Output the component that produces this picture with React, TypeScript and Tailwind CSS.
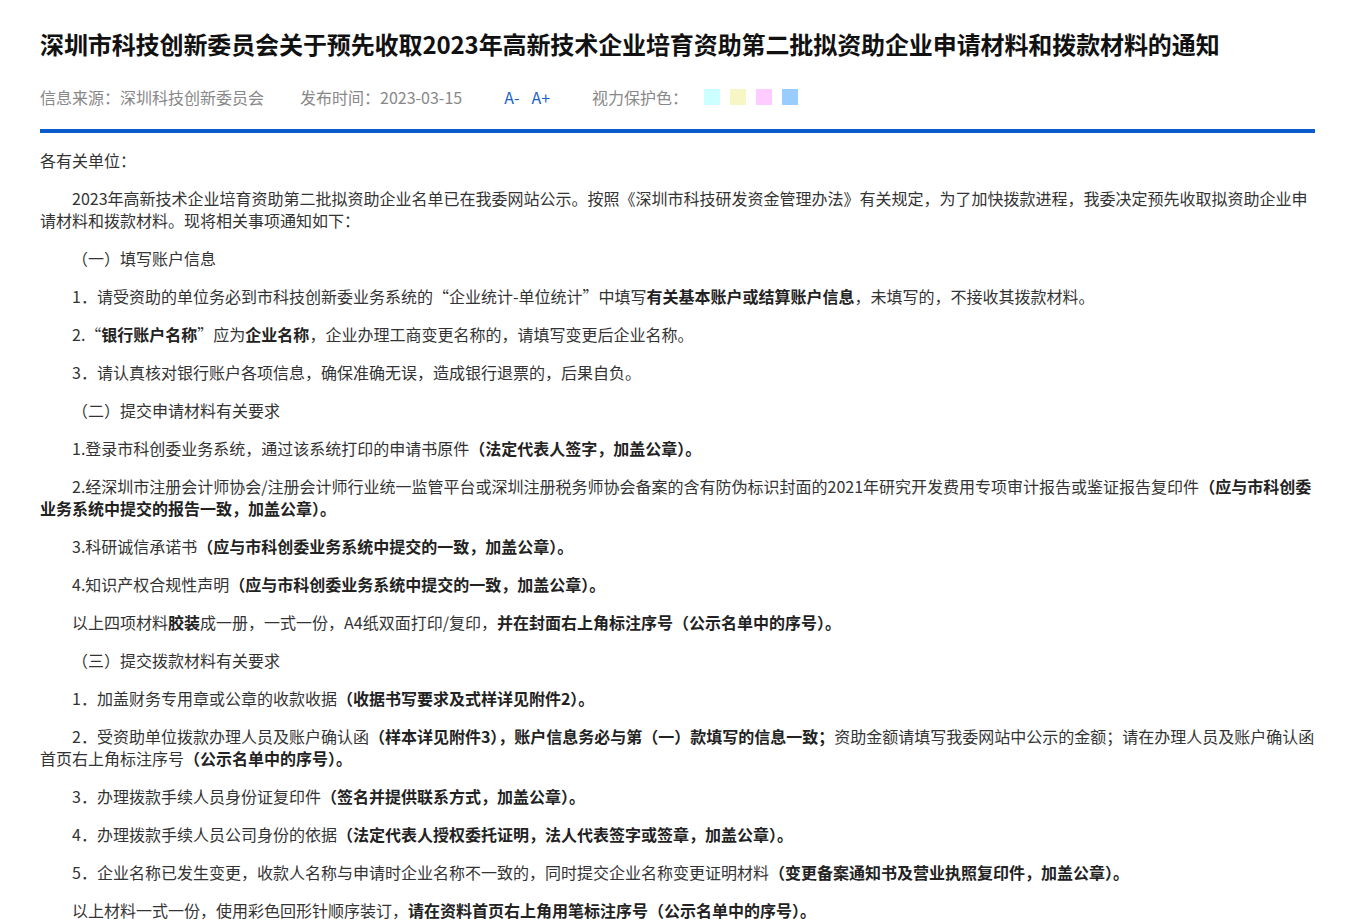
export default function App() {
  const P = ({ children, i = true }: { children: React.ReactNode; i?: boolean }) => (
    <p className={`mb-4 leading-[22px] ${i ? "indent-8" : ""}`}>{children}</p>
  );
  const B = ({ children }: { children: React.ReactNode }) => <b className="font-bold text-[#222]">{children}</b>;
  return (
    <div className="bg-white w-[1360px] h-[924px] overflow-hidden" style={{ fontFamily: '"Noto Sans CJK SC", "Noto Sans", sans-serif' }}>
      <div className="pl-10 pr-[45px]">
        <h1 className="pt-[26px] text-[24px] leading-[36px] font-bold text-[#111] tracking-[-0.1px]">
          深圳市科技创新委员会关于预先收取2023年高新技术企业培育资助第二批拟资助企业申请材料和拨款材料的通知
        </h1>
        <div className="mt-[23px] flex items-center text-[16px] text-[#888] h-6">
          <span>信息来源：深圳科技创新委员会</span>
          <span className="ml-9">发布时间：2023-03-15</span>
          <span className="ml-[42px] text-[#1a5fc8]">A-</span>
          <span className="ml-3 text-[#1a5fc8]">A+</span>
          <span className="ml-[42px]">视力保护色：</span>
          <span className="ml-4 w-4 h-4 bg-[#ccffff]" />
          <span className="ml-[10px] w-4 h-4 bg-[#f7f7c6]" />
          <span className="ml-[10px] w-4 h-4 bg-[#ffccff]" />
          <span className="ml-[10px] w-4 h-4 bg-[#99ccff]" />
        </div>
        <div className="mt-[20px] h-1 bg-[#0a5ccc]" />
        <div className="mt-[16px] text-[16px] text-[#333]">
          <P i={false}>各有关单位：</P>
          <P>2023年高新技术企业培育资助第二批拟资助企业名单已在我委网站公示。按照《深圳市科技研发资金管理办法》有关规定，为了加快拨款进程，我委决定预先收取拟资助企业申请材料和拨款材料。现将相关事项通知如下：</P>
          <P>（一）填写账户信息</P>
          <P>1．请受资助的单位务必到市科技创新委业务系统的“企业统计-单位统计”中填写<B>有关基本账户或结算账户信息</B>，未填写的，不接收其拨款材料。</P>
          <P>2.“<B>银行账户名称</B>”应为<B>企业名称</B>，企业办理工商变更名称的，请填写变更后企业名称。</P>
          <P>3．请认真核对银行账户各项信息，确保准确无误，造成银行退票的，后果自负。</P>
          <P>（二）提交申请材料有关要求</P>
          <P>1.登录市科创委业务系统，通过该系统打印的申请书原件<B>（法定代表人签字，加盖公章）。</B></P>
          <P>2.经深圳市注册会计师协会/注册会计师行业统一监管平台或深圳注册税务师协会备案的含有防伪标识封面的2021年研究开发费用专项审计报告或鉴证报告复印件<B>（应与市科创委业务系统中提交的报告一致，加盖公章）。</B></P>
          <P>3.科研诚信承诺书<B>（应与市科创委业务系统中提交的一致，加盖公章）。</B></P>
          <P>4.知识产权合规性声明<B>（应与市科创委业务系统中提交的一致，加盖公章）。</B></P>
          <P>以上四项材料<B>胶装</B>成一册，一式一份，A4纸双面打印/复印，<B>并在封面右上角标注序号（公示名单中的序号）。</B></P>
          <P>（三）提交拨款材料有关要求</P>
          <P>1．加盖财务专用章或公章的收款收据<B>（收据书写要求及式样详见附件2）。</B></P>
          <P>2．受资助单位拨款办理人员及账户确认函<B>（样本详见附件3），账户信息务必与第（一）款填写的信息一致；</B>资助金额请填写我委网站中公示的金额；请在办理人员及账户确认函首页右上角标注序号<B>（公示名单中的序号）。</B></P>
          <P>3．办理拨款手续人员身份证复印件<B>（签名并提供联系方式，加盖公章）。</B></P>
          <P>4．办理拨款手续人员公司身份的依据<B>（法定代表人授权委托证明，法人代表签字或签章，加盖公章）。</B></P>
          <P>5．企业名称已发生变更，收款人名称与申请时企业名称不一致的，同时提交企业名称变更证明材料<B>（变更备案通知书及营业执照复印件，加盖公章）。</B></P>
          <P>以上材料一式一份，使用彩色回形针顺序装订，<B>请在资料首页右上角用笔标注序号（公示名单中的序号）。</B></P>
        </div>
      </div>
    </div>
  );
}
